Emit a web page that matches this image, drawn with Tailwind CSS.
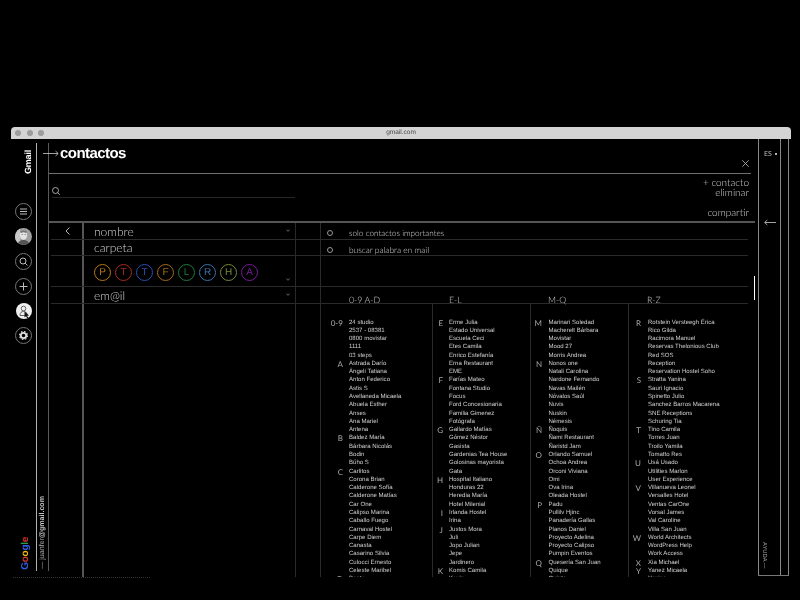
<!DOCTYPE html>
<html lang="es">
<head>
<meta charset="utf-8">
<title>contactos</title>
<script src="https://cdn.jsdelivr.net/npm/@tailwindcss/browser@4"></script>
</head>
<body class="bg-black">
<div class="w-[800px] h-[600px] overflow-hidden pt-[127px] pl-[11px] font-['Lato',sans-serif] text-[#d4d4d4] [text-rendering:geometricPrecision] [will-change:transform]">
  <div class="w-[780px]">
    <div class="relative h-[12px] rounded-t-[4px] bg-[#d4d4d4] flex items-center gap-[5.5px] pl-[4px]">
      <span class="w-[6px] h-[6px] rounded-full bg-[#9c9c9c]"></span>
      <span class="w-[6px] h-[6px] rounded-full bg-[#9c9c9c]"></span>
      <span class="w-[6px] h-[6px] rounded-full bg-[#9c9c9c]"></span>
      <span class="absolute inset-0 text-center text-[6.5px] leading-[12px] text-[#444] font-['Liberation_Sans',sans-serif]">gmail.com</span>
    </div>

    <div class="flex h-[438px]">
      <!-- rail -->
      <div class="w-[25px] h-full flex flex-col items-center pt-[11px]">
        <span class="self-end pr-[4px] mr-[3px] [writing-mode:vertical-rl] rotate-180 text-[9px] leading-[10px] font-bold text-white tracking-[-0.2px] font-['Liberation_Sans',sans-serif]">Gmail</span>
        <div class="mt-[29px] flex flex-col gap-[8px]">
          <span class="w-[17px] h-[17px] rounded-full border border-[#777] flex items-center justify-center">
            <svg class="w-[9px] h-[9px]" viewBox="0 0 9 9" fill="none" stroke="#bbb" stroke-width="1"><path d="M1 2h7M1 4.5h7M1 7h7"/></svg>
          </span>
          <svg class="w-[17px] h-[17px]" viewBox="0 0 17 17"><defs><clipPath id="c"><circle cx="8.5" cy="8.5" r="8.5"/></clipPath></defs><g clip-path="url(#c)"><rect width="17" height="17" fill="#a0a0a0"/><rect x="0" width="5" height="17" fill="#c8c8c8"/><ellipse cx="8.500" cy="7" rx="3.700" ry="4.800" fill="#e2e2e2"/><path d="M5 4c1-2.500 6-2.500 7.200 0l-1 1c-2-1-3.500-1-5.200 0z" fill="#777"/><path d="M6.700 6.500h1.300M9.500 6.500h1.300" stroke="#555" stroke-width=".6"/><path d="M2.500 17c.3-3.500 3-5 6-5s5.700 1.500 6 5z" fill="#555"/></g></svg>
          <span class="w-[17px] h-[17px] rounded-full border border-[#777] flex items-center justify-center">
            <svg class="w-[9px] h-[9px]" viewBox="0 0 9 9" fill="none" stroke="#bbb" stroke-width="1"><circle cx="4" cy="4" r="3"/><path d="M6.200 6.200L8.500 8.500"/></svg>
          </span>
          <span class="w-[17px] h-[17px] rounded-full border border-[#777] flex items-center justify-center">
            <svg class="w-[9px] h-[9px]" viewBox="0 0 9 9" fill="none" stroke="#bbb" stroke-width="1"><path d="M4.500 .5v8M.5 4.500h8"/></svg>
          </span>
          <span class="relative w-[16px] h-[16px] ml-[1px] rounded-full bg-[#eee] flex items-center justify-center">
            <svg class="w-[16px] h-[16px]" viewBox="0 0 16 16" fill="none"><circle cx="7.500" cy="5.500" r="2.300" stroke="#555" stroke-width=".9"/><path d="M4 12.500c0-3 1.500-4 3.500-4s3 .8 3.500 2.500M4 12.500h5" stroke="#555" stroke-width=".9"/><path d="M8.500 8.500l0 6 1.500-1.300 1.200 2 1-.5-1.100-2 2-.2z" fill="#111"/></svg>
          </span>
          <span class="w-[17px] h-[17px] rounded-full border border-[#777] flex items-center justify-center">
            <svg class="w-[9px] h-[9px]" viewBox="0 0 9 9"><circle cx="4.500" cy="4.500" r="2.700" fill="none" stroke="#ddd" stroke-width="1.800" /><circle cx="4.500" cy="4.500" r="4" fill="none" stroke="#ddd" stroke-width="1.100" stroke-dasharray="1.600 1.540"/></svg>
          </span>
        </div>
        <span class="mt-auto mb-[7px] ml-[3px] [writing-mode:vertical-rl] rotate-180 text-[10px] leading-[11px] font-bold tracking-[-0.3px] font-['Liberation_Sans',sans-serif]"><span class="text-[#2f5fe0]">G</span><span class="text-[#d9352b]">o</span><span class="text-[#f2b90f]">o</span><span class="text-[#2f5fe0]">g</span><span class="text-[#2a9a48]">l</span><span class="text-[#d9352b]">e</span></span>
      </div>

      <!-- account strip -->
      <div class="w-[13px] h-[428px] mt-[4px] border-l border-r border-l-[#b0b0b0] border-r-[#5a5a5a] flex flex-col justify-end items-center pb-[2px]">
        <span class="[writing-mode:vertical-rl] rotate-180 text-[7.1px] leading-[9px] text-[#a8a8a8] whitespace-nowrap font-['Liberation_Sans',sans-serif]">— juanfer<span class="font-bold text-[#c8c8c8]">@gmail.com</span></span>
      </div>

      <!-- main -->
      <div class="w-[709px] h-full flex flex-col pt-[4px]">
        <div class="relative h-[31px] w-[702px] border-b border-[#707070] flex justify-between pl-[11px] pr-[2px]">
          <svg class="absolute left-[-6px] top-[7px] w-[16px] h-[7px]" viewBox="0 0 16 7" fill="none" stroke="#ccc" stroke-width=".8"><path d="M0 3.500h15M12.500 1l2.700 2.500-2.700 2.500"/></svg>
          <span class="mt-[1px] text-[15px] leading-[20px] font-bold text-white tracking-[-0.55px] font-['Liberation_Sans',sans-serif]">contactos</span>
          <svg class="w-[7px] h-[7px] mt-[17px]" viewBox="0 0 7 7" fill="none" stroke="#bbb" stroke-width=".8"><path d="M.3 .3l6.400 6.400M6.700 .3L.3 6.700"/></svg>
        </div>

        <div class="h-[49px] w-[706px] border-b-2 border-[#555] flex justify-between pr-[6px]">
          <div class="w-[243px] ml-[3px] h-[25px] mt-[-1px] pt-[14px] border-b border-[#262626]">
            <svg class="w-[8px] h-[8px]" viewBox="0 0 8 8" fill="none" stroke="#ccc" stroke-width=".8"><circle cx="3.500" cy="3.500" r="3"/><path d="M5.700 5.700L7.800 7.800"/></svg>
          </div>
          <div class="text-right text-[10px] leading-[10px] font-light pt-[4px]">
            <p>+ contacto</p>
            <p>eliminar</p>
            <p class="mt-[10px]">compartir</p>
          </div>
        </div>

        <div class="relative w-[706px] flex-1 min-h-0 flex flex-col">
          <div class="absolute right-0 top-[53px] w-[1.500px] h-[24px] bg-white"></div>

          <div class="flex h-[16.500px] ml-[2px] mr-[7px] border-b border-[#2a2a2a]">
            <div class="w-[31px] flex justify-center items-center pl-[2px]">
              <svg class="w-[5px] h-[8px]" viewBox="0 0 5 8" fill="none" stroke="#ccc" stroke-width=".9"><path d="M4.500 .5L1 4l3.500 3.500"/></svg>
            </div>
            <div class="w-[213px] border-l-2 border-[#555] pl-[10px] pr-[5px] flex justify-between items-center">
              <span class="text-[12px] leading-[15px] font-light pt-[1px]">nombre</span>
              <svg class="w-[4px] h-[3px]" viewBox="0 0 4 3" fill="none" stroke="#999" stroke-width=".7"><path d="M.3 .5L2 2.300 3.700 .5"/></svg>
            </div>
            <div class="w-[25px] border-l border-[#2a2a2a]"></div>
            <div class="flex-1 border-l border-[#2a2a2a] pl-[6px] pt-[5px] flex items-center">
              <span class="w-[6px] h-[6px] rounded-full border border-[#999]"></span>
              <span class="ml-[16px] text-[8.200px] leading-[10px] font-light">solo contactos importantes</span>
            </div>
          </div>

          <div class="flex h-[16px] ml-[2px] mr-[7px] border-b border-[#2a2a2a]">
            <div class="w-[31px]"></div>
            <div class="w-[213px] border-l-2 border-[#555] pl-[10px] flex items-center">
              <span class="text-[12px] leading-[15px] font-light">carpeta</span>
            </div>
            <div class="w-[25px] border-l border-[#2a2a2a]"></div>
            <div class="flex-1 border-l border-[#2a2a2a] pl-[6px] pt-[5px] flex items-center">
              <span class="w-[6px] h-[6px] rounded-full border border-[#999]"></span>
              <span class="ml-[16px] text-[8.400px] leading-[10px] font-light">buscar palabra en mail</span>
            </div>
          </div>

          <div class="flex h-[31.500px] ml-[2px] mr-[7px] border-b border-[#2a2a2a]">
            <div class="w-[31px]"></div>
            <div class="relative w-[213px] border-l-2 border-[#555] pl-[10px] pr-[5px] pt-[8px] flex gap-[4px] items-start text-[10px] font-['Liberation_Sans',sans-serif]">
              <span class="w-[17px] h-[17px] rounded-full border border-[#b57a16] text-[#b57a16] flex items-center justify-center">P</span>
              <span class="w-[17px] h-[17px] rounded-full border border-[#a82a20] text-[#a82a20] flex items-center justify-center">T</span>
              <span class="w-[17px] h-[17px] rounded-full border border-[#2a4eb5] text-[#2a4eb5] flex items-center justify-center">T</span>
              <span class="w-[17px] h-[17px] rounded-full border border-[#a86a1a] text-[#a86a1a] flex items-center justify-center">F</span>
              <span class="w-[17px] h-[17px] rounded-full border border-[#217a3c] text-[#217a3c] flex items-center justify-center">L</span>
              <span class="w-[17px] h-[17px] rounded-full border border-[#3a72ab] text-[#3a72ab] flex items-center justify-center">R</span>
              <span class="w-[17px] h-[17px] rounded-full border border-[#76893a] text-[#76893a] flex items-center justify-center">H</span>
              <span class="w-[17px] h-[17px] rounded-full border border-[#7a1a9c] text-[#7a1a9c] flex items-center justify-center">A</span>
              <svg class="absolute right-[5px] bottom-[5px] w-[4px] h-[3px]" viewBox="0 0 4 3" fill="none" stroke="#999" stroke-width=".7"><path d="M.3 .5L2 2.300 3.700 .5"/></svg>
            </div>
            <div class="w-[25px] border-l border-[#2a2a2a]"></div>
            <div class="flex-1 border-l border-[#2a2a2a]"></div>
          </div>

          <div class="flex h-[16.500px] ml-[2px] mr-[7px] border-b border-[#2a2a2a]">
            <div class="w-[31px]"></div>
            <div class="w-[213px] border-l-2 border-[#555] pl-[10px] pr-[5px] flex justify-between items-center">
              <span class="text-[12px] leading-[15px] font-light pt-[2px]">em@il</span>
              <svg class="w-[4px] h-[3px]" viewBox="0 0 4 3" fill="none" stroke="#999" stroke-width=".7"><path d="M.3 .5L2 2.300 3.700 .5"/></svg>
            </div>
            <div class="w-[25px] border-l border-[#2a2a2a]"></div>
            <div class="flex-1 border-l border-[#2a2a2a] grid grid-cols-[111px_98px_98px_1fr] items-center text-[8.800px] leading-[15px] font-light pt-[5px]">
              <span class="pl-[28px]">0-9 A-D</span>
              <span class="pl-[17px]">E-L</span>
              <span class="pl-[18px]">M-Q</span>
              <span class="pl-[19px]">R-Z</span>
            </div>
          </div>

          <div class="flex flex-1 min-h-0 ml-[2px] mr-[7px] overflow-hidden">
            <div class="w-[31px]"></div>
            <div class="w-[213px] border-l-2 border-[#555]"></div>
            <div class="w-[25px] border-l border-[#2a2a2a]"></div>
            <div class="flex-1 border-l border-[#2a2a2a] grid grid-cols-[111px_98px_98px_1fr] text-[6.050px] leading-[8.280px] text-[#cfcfcf] font-['Liberation_Sans',sans-serif] whitespace-nowrap overflow-hidden [&_span]:text-right [&_span]:shrink-0 [&_span]:text-[8px] [&_span]:text-[#a8a8a8] [&_span]:font-['Lato',sans-serif]">
              <div class="pt-[15px] [&>div]:flex [&>div]:gap-[6px] [&_span]:w-[22px]">
                <div><span>0-9</span><p>24 studio<br>2537 - 08381<br>0800 movistar<br>1111<br>03 steps</p></div>
                <div><span>A</span><p>Astrada Darío<br>Ángeli Tatiana<br>Anton Federico<br>Astis S<br>Avellaneda Micaela<br>Abuela Esther<br>Anses<br>Ana Mariel<br>Antena</p></div>
                <div><span>B</span><p>Baldez María<br>Bárbara Nicolás<br>Bodin<br>Búho S</p></div>
                <div><span>C</span><p>Carlitos<br>Corona Brian<br>Calderone Sofía<br>Calderone Matías<br>Car One<br>Calipso Marina<br>Caballo Fuego<br>Carnaval Hostel<br>Carpe Diem<br>Canasta<br>Casarino Silvia<br>Culocci Ernesto<br>Celeste Maribel</p></div>
                <div><span>D</span><p>Dante</p></div>
              </div>
              <div class="pt-[15px] border-l border-[#2a2a2a] [&>div]:flex [&>div]:gap-[6px] [&_span]:w-[10px]">
                <div><span>E</span><p>Erme Julia<br>Estado Universal<br>Escuela Ceci<br>Etes Camila<br>Enrico Estefanía<br>Erna Restaurant<br>EME</p></div>
                <div><span>F</span><p>Farías Mateo<br>Fontana Studio<br>Focus<br>Ford Concesionaria<br>Familia Gimenez<br>Fotógrafa</p></div>
                <div><span>G</span><p>Gallardo Matías<br>Gómez Néstor<br>Gasista<br>Gardenias Tea House<br>Golosinas mayorista<br>Gata</p></div>
                <div><span>H</span><p>Hospital Italiano<br>Honduras 22<br>Heredia María<br>Hotel Milenial</p></div>
                <div><span>I</span><p>Irlanda Hostel<br>Irina</p></div>
                <div><span>J</span><p>Justos Mora<br>Juli<br>Jopo Julian<br>Jepe<br>Jardinero</p></div>
                <div><span>K</span><p>Komis Camila<br>Kevin</p></div>
              </div>
              <div class="pt-[15px] border-l border-[#2a2a2a] [&>div]:flex [&>div]:gap-[6.500px] [&_span]:w-[11px]">
                <div><span>M</span><p>Marinari Soledad<br>Macherelt Bárbara<br>Movistar<br>Mood 27<br>Morris Andrea</p></div>
                <div><span>N</span><p>Nonos one<br>Natali Carolina<br>Nardone Fernando<br>Navas Mailén<br>Nóvalos Saúl<br>Nuvis<br>Nuskin<br>Némesis</p></div>
                <div><span>Ñ</span><p>Ñoquis<br>Ñami Restaurant<br>Ñaristd Jam</p></div>
                <div><span>O</span><p>Orlando Samuel<br>Ochoa Andrea<br>Orconi Viviana<br>Omi<br>Ova Irina<br>Oleada Hostel</p></div>
                <div><span>P</span><p>Padu<br>Pullilv Hjinc<br>Panadería Gallas<br>Planos Daniel<br>Proyecto Adelina<br>Proyecto Calipso<br>Pumpin Eventos</p></div>
                <div><span>Q</span><p>Quesería San Juan<br>Quique<br>Quinta</p></div>
              </div>
              <div class="pt-[15px] border-l border-[#2a2a2a] [&>div]:flex [&>div]:gap-[7px] [&_span]:w-[12px]">
                <div><span>R</span><p>Rotstein Versteegh Érica<br>Rico Gilda<br>Racimora Manuel<br>Reservas Thelonious Club<br>Red SOS<br>Reception<br>Reservation Hostel Soho</p></div>
                <div><span>S</span><p>Stratta Yanina<br>Sauri Ignacio<br>Spinetto Julio<br>Sanchez Barros Macarena<br>SNE Receptions<br>Schuring Tia</p></div>
                <div><span>T</span><p>Tino Camila<br>Torres Juan<br>Troilo Yamila<br>Tomatto Res</p></div>
                <div><span>U</span><p>Usá Usado<br>Utilities Marlon<br>User Experience</p></div>
                <div><span>V</span><p>Villanueva Leonel<br>Versalles Hotel<br>Ventas CarOne<br>Vorsal James<br>Val Caroline<br>Villa San Juan</p></div>
                <div><span>W</span><p>World Architects<br>WordPress Help<br>Work Access</p></div>
                <div><span>X</span><p>Xia Michael</p></div>
                <div><span>Y</span><p>Yanez Micaela<br>Yanina</p></div>
              </div>
            </div>
          </div>
        </div>
      </div>

      <!-- right strip -->
      <div class="w-[31px] h-[437px] flex border-b border-[#777]">
        <div class="w-[22px] h-full border-l border-[#888] flex flex-col pl-[5px]">
          <p class="mt-[11px] text-[7px] leading-[8px] text-[#bbb] flex items-center gap-[3px]">ES <span class="w-[2px] h-[2px] rounded-full bg-[#eee]"></span></p>
          <svg class="mt-[61px] w-[12px] h-[7px]" viewBox="0 0 12 7" fill="none" stroke="#ccc" stroke-width=".8"><path d="M12 3.500H.7M3.300 1L.7 3.500 3.300 6"/></svg>
          <span class="mt-auto mb-[6px] ml-[-4px] self-start [writing-mode:vertical-rl] text-[5.8px] leading-[8px] text-[#aaa] font-['Liberation_Sans',sans-serif] whitespace-nowrap">AYUDA —</span>
        </div>
        <div class="w-[9px] h-full border-l border-r border-[#888]"></div>
      </div>
    </div>
    <div class="ml-[2px] w-[137px] border-t border-dotted border-[#333]"></div>
  </div>
</div>
</body>
</html>
